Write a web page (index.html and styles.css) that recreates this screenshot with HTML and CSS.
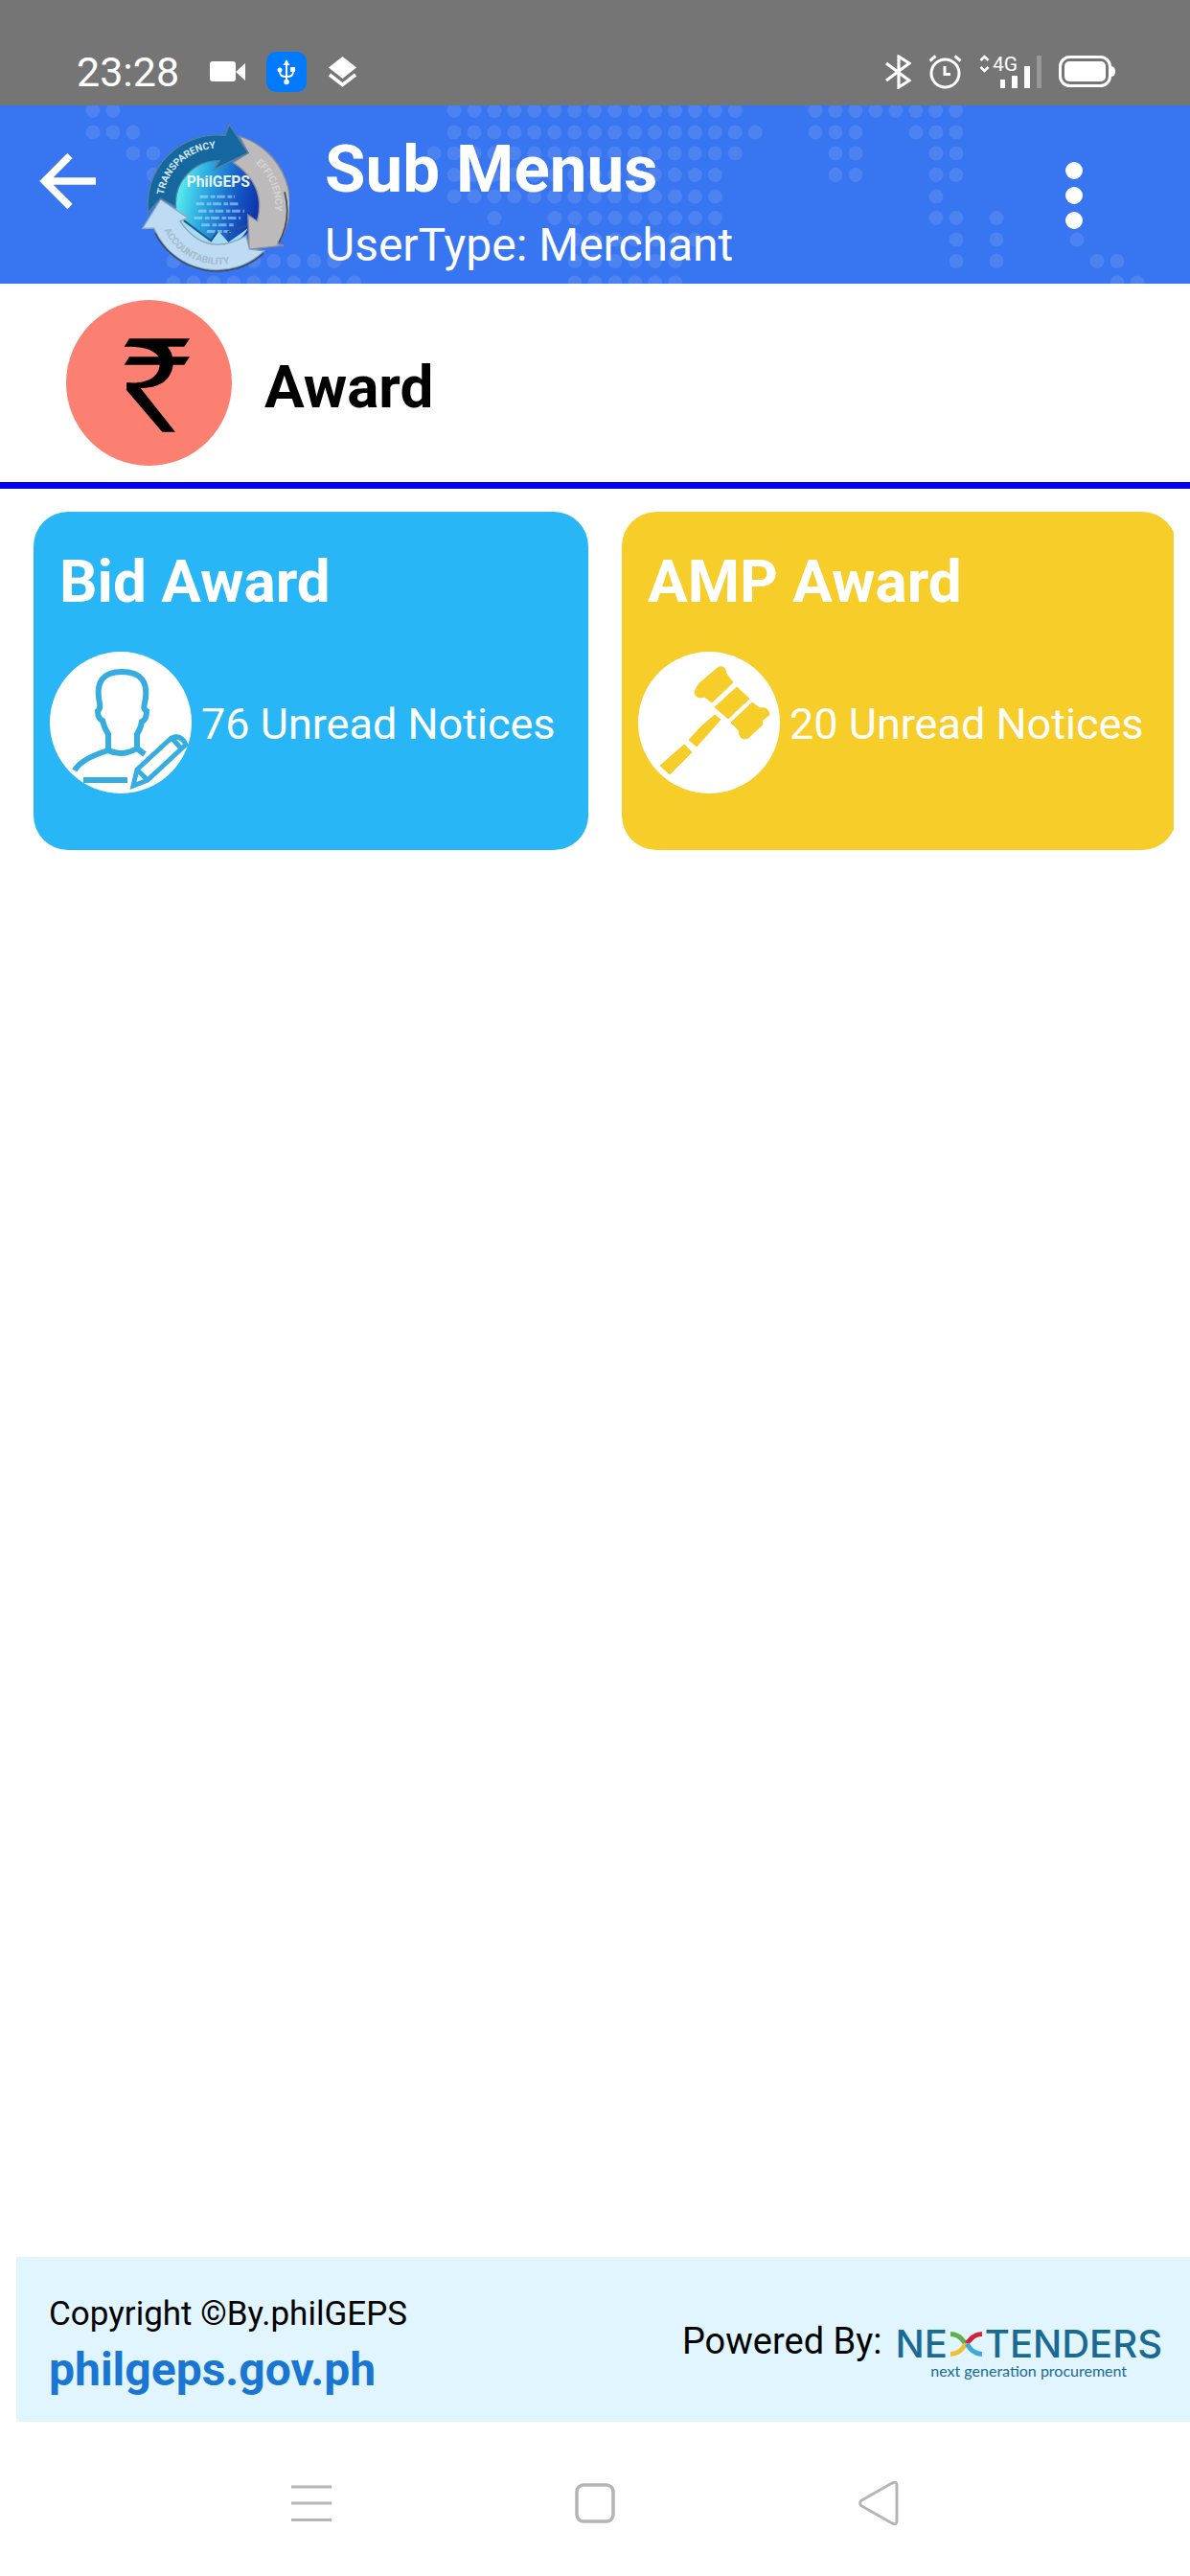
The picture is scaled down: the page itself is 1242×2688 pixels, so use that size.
FILE: index.html
```html
<!DOCTYPE html>
<html lang="en">
<head>
<meta charset="utf-8">
<meta name="viewport" content="width=device-width, initial-scale=1">
<title>Sub Menus</title>
<link rel="stylesheet" href="styles.css">
</head>
<body>
<div class="status">
  <div class="status-left">
    <time class="clock">23:28</time>
    <svg width="37" height="22" viewBox="0 0 37 22" fill="#fff"><rect width="27" height="21" rx="3"/><path d="M27 11L37 2V20Z"/></svg>
    <svg width="42" height="42" viewBox="0 0 42 42"><rect width="42" height="42" rx="10" fill="#007aff"/><g fill="none" stroke="#fff" stroke-width="2"><path d="M21 13V32M14 20C14 25 16 26 21 26S28 25 28 20"/></g><g fill="#fff"><path d="M21 8L24.500 14H17.500Z"/><circle cx="14" cy="19" r="2.500"/><rect x="25" y="16" width="5" height="5"/><circle cx="21" cy="31.500" r="2.800"/></g></svg>
    <svg width="31" height="34" viewBox="0 0 31 34"><path d="M15.500 1L30 12.500L15.500 24L1 12.500Z" fill="#fff"/><path d="M2 20L15.500 30.500L29 20" fill="none" stroke="#fff" stroke-width="3.600"/></svg>
  </div>
  <div class="status-right">
    <svg width="27" height="36" viewBox="0 0 27 36" fill="none" stroke="#fff" stroke-width="3.200"><path d="M1 9L25 27L14 34V2L25 9L1 27"/></svg>
    <svg width="35" height="36" viewBox="0 0 35 36" fill="none" stroke="#fff" stroke-width="3"><circle cx="17.500" cy="19.500" r="14.500"/><path d="M1.500 6.500L7.500 1.500M33.500 6.500L27.500 1.500M17 12V20.500H23"/></svg>
    <svg class="signal" width="65" height="36" viewBox="0 0 65 36" fill="#fff"><path d="M1.500 6L5.500 2L9.500 6M1.500 13L5.500 17L9.500 13" fill="none" stroke="#fff" stroke-width="2.500"/><text class="net" x="14" y="17">4G</text><rect x="22" y="26" width="5" height="9"/><rect x="34" y="22" width="6" height="13"/><rect x="47" y="12" width="6" height="23"/><rect x="60" y="1" width="5" height="34" fill="#989898"/></svg>
    <svg width="59" height="34" viewBox="0 0 59 34"><rect x="1.500" y="1.500" width="52" height="30" rx="10" fill="none" stroke="#fff" stroke-width="3"/><rect x="6" y="6" width="43" height="21" rx="5" fill="#fff"/><path d="M54 11Q59 11 59 16.500T54 22Z" fill="#fff"/></svg>
  </div>
</div>

<header class="bar">
  <svg class="dots" width="1242" height="186" viewBox="0 0 1242 186" aria-hidden="true">
    <path d="M97 5.500h22M474 5.500h295M851 5.500h149
      M97 28h43M474 28h316M851 28h43M956 28h43
      M139 50h22M453 50h317M872 50h22M977 50h22
      M160 72.500h1M474 72.500h274M872 72.500h22M977 72.500h22
      M474 95h274M977 95h1
      M516 117.500h1M579 117.500h169M977 117.500h22M1040 117.500h1
      M600 140h127M998 140h1M1040 140h1M1124 140h1
      M181 162.500h169M600 162.500h106M998 162.500h1M1040 162.500h1M1145 162.500h22
      M181 185h190M600 185h106M1166 185h22"/>
  </svg>
  <button class="back" aria-label="Back"><svg width="60" height="60" viewBox="0 0 60 60" fill="none" stroke="#fff" stroke-width="7.500"><path d="M59 30H6M32 3.500L5.500 30L32 56.500"/></svg></button>
  <svg class="seal" width="157" height="158" viewBox="50 50 470 475" role="img" aria-label="PhilGEPS">
    <defs>
      <linearGradient id="globe" x1="0" y1=".4" x2="1" y2=".6"><stop offset="0" stop-color="#5cf2ee"/><stop offset=".35" stop-color="#27a5e2"/><stop offset=".7" stop-color="#1558c6"/><stop offset="1" stop-color="#0b2fa8"/></linearGradient>
      <path id="arcA" d="M126 280A176 176 0 0 1 380 152"/>
      <path id="arcB" d="M415 180A172 172 0 0 1 452 400"/>
      <path id="arcC" d="M128 390A192 192 0 0 0 400 470"/>
    </defs>
    <circle cx="297" cy="303" r="134" fill="url(#globe)"/>
    <path d="M170 345Q220 375 275 424L300 395L330 428L390 385Q370 434 300 436Q200 430 170 345Z" fill="#a5dbf4"/>
    <path d="M240 285H350M228 308H362M235 330H380M222 352H368M245 374H350M262 394H338" stroke="#b9d8f2" stroke-width="9" stroke-dasharray="26 8 14 5" opacity=".6"/>
    <path d="M190 360L275 424L295 395M330 425V395L390 375" stroke="#20558c" stroke-width="6" fill="none"/>
    <g stroke-width="4">
      <path d="M365 96A222 222 0 0 1 484 434L504 438L395 450L391 342L420 362Q450 250 345 178L392 148Z" fill="#bdbabb" stroke="#8c8c92"/>
      <path d="M442 455A213 213 0 0 1 96 384L60 385L117 293L203 352L178 362Q260 480 385 408L396 450Z" fill="#bddbf2" stroke="#8aa4bb"/>
      <path d="M78 335A218 218 0 0 1 320 93L332 58L392 148L284 200L302 172A134 134 0 0 0 165 318L117 291Z" fill="#14679f" stroke="#57819f"/>
    </g>
    <path d="M100 400A218 218 0 0 0 440 463M488 430A218 218 0 0 0 506 270" fill="none" stroke="#3f4a5c" stroke-width="5"/>
    <text class="ring ring-light"><textPath href="#arcA">TRANSPARENCY</textPath></text>
    <text class="ring ring-grey"><textPath href="#arcB">EFFICIENCY</textPath></text>
    <text class="ring ring-blue"><textPath href="#arcC">ACCOUNTABILITY</textPath></text>
    <text class="seal-name" x="298" y="254">PhilGEPS</text>
  </svg>
  <div class="titles">
    <h1>Sub Menus</h1>
    <p>UserType: Merchant</p>
  </div>
  <button class="more" aria-label="More options"><svg width="18" height="70" viewBox="0 0 18 70" fill="#fff"><circle cx="9" cy="9" r="9"/><circle cx="9" cy="35" r="9"/><circle cx="9" cy="61" r="9"/></svg></button>
</header>

<main>
  <section class="section-head">
    <svg width="173" height="173" viewBox="207 70 519 519" aria-hidden="true"><circle cx="466.500" cy="329.500" r="259.500" fill="#fb8072"/><path d="M389 216L405 191H594L577 216H525Q537 231 540 248H594L577 273H542C535 322 500 345 440 346L549 483H508L396 352V328C460 335 498 310 500 273H389L405 248H497C480 224 450 216 389 216Z"/></svg>
    <h2>Award</h2>
  </section>

  <div class="cards-wrap">
    <div class="cards">
      <a class="card card-blue" href="#bid">
        <h3>Bid Award</h3>
        <div class="card-row">
          <svg width="148" height="148" viewBox="0 0 148 148" aria-hidden="true"><circle cx="74" cy="74" r="74" fill="#fff"/><g fill="none" stroke="#36ade0" stroke-width="6"><path d="M61 102V86Q57 80 55 72Q50 70 50 62Q53 60 52 54Q45 21 75 21Q106 21 99 54Q97 60 101 62Q101 71 96 73Q95 80 91 86V101L99 107M26 124Q32 112 61 103Q75 110 91 101M35 134H81"/><path d="M87 140L91 123L127 90Q137 86 142 97L102 134ZM91 123L102 134M127 90L138 102" stroke-width="5"/></g></svg>
          <p>76 Unread Notices</p>
        </div>
      </a>
      <a class="card card-yellow" href="#amp">
        <h3>AMP Award</h3>
        <div class="card-row">
          <svg width="148" height="148" viewBox="0 0 148 148" aria-hidden="true"><circle cx="74" cy="74" r="74" fill="#fff"/><g fill="#f7cd29" stroke="#f7cd29" stroke-width="1" stroke-linejoin="round"><path d="M84 16Q91 14 92 23L99 32L77 53L69 47Q61 50 59 43Q60 38 64 33Z"/><path d="M103 37L116 49L94 70L80 58Z"/><path d="M119 53L127 59Q136 57 137 66L129 72L130 76L115 90Q106 94 105 82L97 74Z"/><path d="M80 66L86 71L61 99L53 92L66 78Z"/><path d="M48 97L56 105L33 128L23 119Z"/></g></svg>
          <p>20 Unread Notices</p>
        </div>
      </a>
    </div>
  </div>
</main>

<footer class="foot">
  <div class="legal">
    <p>Copyright ©By.philGEPS</p>
    <a href="#home">philgeps.gov.ph</a>
  </div>
  <div class="powered">
    <p>Powered By:</p>
    <div class="brand">
      <div class="brand-name"><span>NE</span><svg width="33" height="28" viewBox="0 0 33 26" role="img" aria-label="X" fill="none" stroke-width="5"><path d="M0 2.500Q8 3 12 8L16 13" stroke="#5fb04a"/><path d="M33 2.500Q25 3 21 8L17 12" stroke="#d2233c"/><path d="M0 23.500Q8 23 12 18L16 13" stroke="#f0c033"/><path d="M33 23.500Q25 23 21 18L17 13" stroke="#3fa9dc"/></svg><span>TENDERS</span></div>
      <p class="brand-tag">next generation procurement</p>
    </div>
  </div>
</footer>

<nav class="nav" aria-label="System">
  <button aria-label="Recent"><svg width="42" height="46" viewBox="0 0 42 46" stroke="#b5b5b5" stroke-width="3"><path d="M0 6H42M0 23H42M0 40.500H42"/></svg></button>
  <button aria-label="Home"><svg width="42" height="46" viewBox="0 0 42 46" fill="none" stroke="#b5b5b5" stroke-width="3.500"><rect x="2" y="4" width="38" height="38" rx="7"/></svg></button>
  <button aria-label="Back"><svg width="42" height="46" viewBox="0 0 42 46" fill="none" stroke="#b5b5b5" stroke-width="3"><path d="M2.500 20.500L35 2Q40 0 40 4V42Q40 46 35 44L2.500 25.500Q1 23 2.500 20.500Z"/></svg></button>
</nav>
</body>
</html>
```
FILE: styles.css
```css
* {
  box-sizing: border-box;
  margin: 0;
  padding: 0;
}

body {
  display: flex;
  flex-direction: column;
  min-height: 100vh;
  background: #fff;
  color: #000;
  font-family: Roboto, "Liberation Sans", sans-serif;
}

svg {
  display: block;
  flex: none;
}

button {
  border: 0;
  background: none;
  cursor: pointer;
}

a {
  color: inherit;
  text-decoration: none;
}

/* Status bar */
.status {
  display: flex;
  justify-content: space-between;
  padding: 54px 78px 14px 80px;
  background: #757575;
  color: #fff;
}

.status-left,
.status-right {
  display: flex;
  align-items: center;
}

.status-left {
  gap: 22px;
}

.status-right {
  gap: 18px;
}

.clock {
  margin-right: 10px;
  font-size: 43px;
  line-height: 42px;
}

.signal {
  overflow: visible;
}

.net {
  font-size: 21px;
}

/* App bar */
.bar {
  position: relative;
  display: flex;
  padding: 17px 112px 11px 41px;
  overflow: hidden;
  background: #3875f0;
  color: #fff;
}

.bar > * {
  position: relative;
}

.bar .dots {
  position: absolute;
  top: 0;
  left: 0;
  fill: none;
  stroke: #fff;
  stroke-width: 15;
  stroke-linecap: round;
  stroke-dasharray: 0 20.95;
  opacity: 0.1;
}

.back {
  height: 124px;
}

.seal {
  margin: 0 37px 0 44px;
}

.ring {
  font-size: 31px;
  font-weight: 700;
}

.ring-light {
  fill: #d5e6f2;
}

.ring-grey {
  fill: #d6d4d5;
}

.ring-blue {
  font-size: 30px;
  fill: #a3b9cc;
}

.seal-name {
  fill: #e6f2fa;
  font-size: 47px;
  font-weight: 700;
  text-anchor: middle;
}

.titles {
  flex: 1;
  padding-top: 10px;
}

h1 {
  font-size: 69px;
  line-height: 80px;
}

.titles p {
  margin-top: 11px;
  font-size: 48px;
  line-height: 56px;
}

.more {
  height: 154px;
}

/* Content */
main {
  flex: 1;
}

.section-head {
  display: flex;
  align-items: center;
  gap: 34px;
  padding: 17px 69px;
  border-bottom: 7px solid #0000ef;
}

h2 {
  padding-top: 8px;
  font-size: 62px;
  line-height: 72px;
}

.cards-wrap {
  margin: 24px 17px 0 35px;
  overflow: hidden;
}

.cards {
  display: grid;
  grid-template-columns: 1fr 1fr;
  gap: 35px;
  margin-right: -3px;
}

.card {
  padding: 37px 17px 59px;
  border-radius: 36px;
  color: #fff;
}

.card-blue {
  background: #29b6f6;
}

.card-yellow {
  background: #f7cd29;
}

h3 {
  margin-left: 10px;
  font-size: 62px;
  line-height: 72px;
}

.card-row {
  display: flex;
  align-items: center;
  gap: 10px;
  margin-top: 37px;
}

.card-row p {
  padding-top: 4px;
  font-size: 45px;
  line-height: 52px;
  white-space: nowrap;
}

/* Footer */
.foot {
  display: flex;
  justify-content: space-between;
  margin-left: 17px;
  padding: 37px 29px 26px 34px;
  background: #e1f5fe;
}

.legal p {
  font-size: 35px;
  line-height: 46px;
}

.legal a {
  display: block;
  margin-top: 7px;
  color: #1976d2;
  font-size: 48px;
  font-weight: 700;
  line-height: 56px;
}

.powered {
  display: flex;
  align-items: flex-start;
  gap: 14px;
}

.powered p {
  padding-top: 28px;
  font-size: 38px;
  line-height: 46px;
}

.brand {
  padding-top: 38px;
  color: #1b6a93;
}

.brand-name {
  display: flex;
  align-items: center;
  gap: 3px;
  font-family: Inter, sans-serif;
  font-size: 40px;
  font-weight: 500;
  line-height: 32px;
}

.powered .brand-tag {
  padding-top: 0;
  font-family: Lato, sans-serif;
  font-size: 16px;
  line-height: 24px;
  text-align: center;
}

/* System navigation */
.nav {
  display: flex;
  justify-content: center;
  gap: 254px;
  padding: 62px 0 53px;
}
```
